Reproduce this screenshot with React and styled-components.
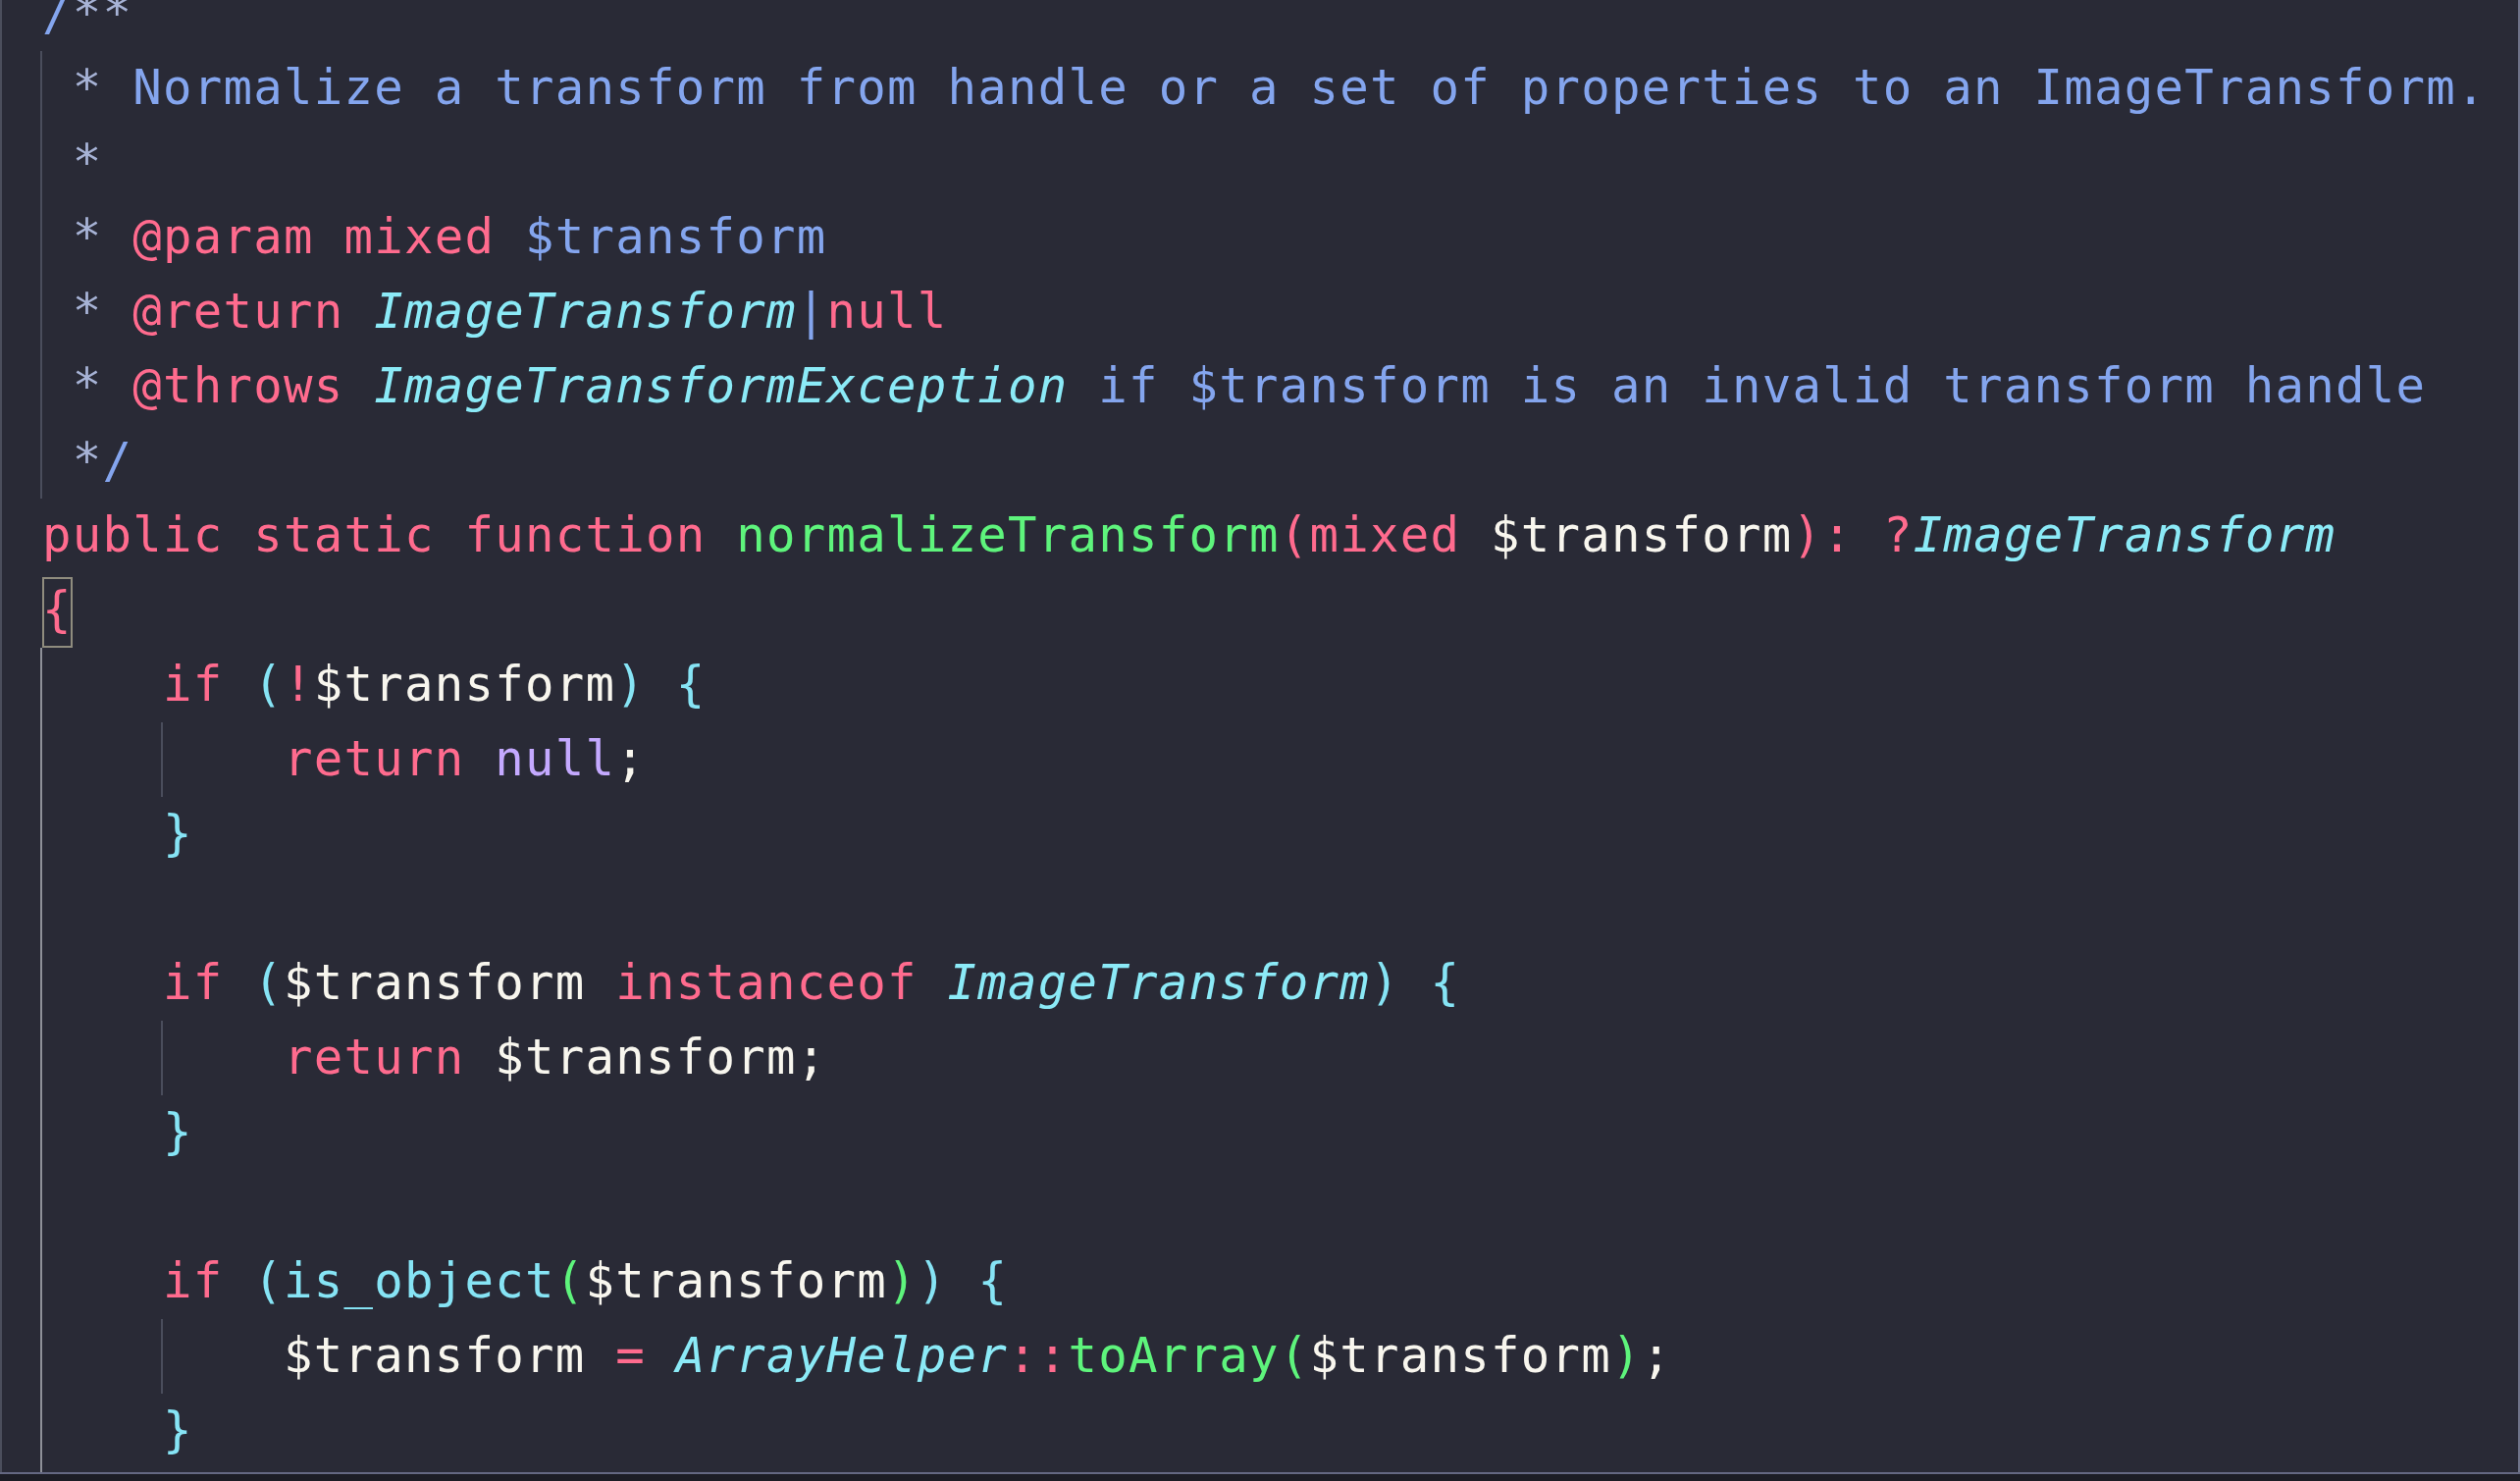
import React from "react";
import styled, { createGlobalStyle } from "styled-components";

const CHAR = 30.75;

const GlobalStyle = createGlobalStyle`
  html, body {
    margin: 0;
    padding: 0;
    background: #1c1d25;
    overflow: hidden;
  }
`;

const Editor = styled.div`
  width: 2568px;
  height: 1509px;
  box-sizing: border-box;
  display: flex;
  flex-direction: column;
  background: #1c1d25;
`;

const Viewport = styled.div`
  flex: 1;
  min-height: 0;
  overflow: hidden;
  background: #292a36;
  border-left: 2px solid #4b4e5c;
  border-right: 2px solid #70748a;
  padding-left: 41px;
`;

const BottomRule = styled.div`
  height: 2px;
  background: #646882;
`;

const BottomStrip = styled.div`
  height: 7px;
  background: #1c1d25;
`;

const Code = styled.div`
  margin-top: -24px;
  font-family: "DejaVu Sans Mono", "Liberation Mono", monospace;
  font-size: 49px;
  letter-spacing: 1.25px;
`;

const Line = styled.div`
  position: relative;
  height: 76px;
  line-height: 76px;
  white-space: pre;
`;

const Guide = styled.span`
  position: absolute;
  top: 0;
  bottom: 0;
  left: ${(p) => p.$col * CHAR - 2}px;
  width: ${(p) => (p.$active ? 2 : 1.5)}px;
  background: ${(p) => (p.$active ? "#8e9098" : "#4a4d5c")};
`;

const colors = {
  comment: "#84a5ee",
  star: "#a7b3d6",
  tag: "#ff6b8e",
  kw: "#ff6b8e",
  fn: "#5ef47c",
  var: "#f8f6ee",
  type: "#8beaf7",
  cyan: "#86e4f5",
  green: "#5ef47c",
  constant: "#c4a9ff",
};

const Token = styled.span`
  color: ${(p) => colors[p.$k] || "#f8f6ee"};
  font-style: ${(p) => (p.$k === "type" ? "italic" : "normal")};
`;

const Matched = styled.span`
  color: ${colors.kw};
  padding: 5px 0 10px;
  box-shadow: inset 0 0 0 2px #8f8c7e;
`;

const lines = [
  { t: [["/", "comment"], ["**", "star"]] },
  {
    g: [[0, false]],
    t: [
      [" ", ""],
      ["*", "star"],
      [" Normalize a transform from handle or a set of properties to an ImageTransform.", "comment"],
    ],
  },
  { g: [[0, false]], t: [[" ", ""], ["*", "star"]] },
  {
    g: [[0, false]],
    t: [
      [" ", ""],
      ["*", "star"],
      [" ", ""],
      ["@param mixed", "tag"],
      [" $transform", "comment"],
    ],
  },
  {
    g: [[0, false]],
    t: [
      [" ", ""],
      ["*", "star"],
      [" ", ""],
      ["@return", "tag"],
      [" ", ""],
      ["ImageTransform", "type"],
      ["|", "comment"],
      ["null", "tag"],
    ],
  },
  {
    g: [[0, false]],
    t: [
      [" ", ""],
      ["*", "star"],
      [" ", ""],
      ["@throws", "tag"],
      [" ", ""],
      ["ImageTransformException", "type"],
      [" if $transform is an invalid transform handle", "comment"],
    ],
  },
  { g: [[0, false]], t: [[" ", ""], ["*", "star"], ["/", "comment"]] },
  {
    t: [
      ["public static function ", "kw"],
      ["normalizeTransform", "fn"],
      ["(", "kw"],
      ["mixed", "kw"],
      [" ", ""],
      ["$transform", "var"],
      [")", "kw"],
      [":", "kw"],
      [" ", ""],
      ["?", "kw"],
      ["ImageTransform", "type"],
    ],
  },
  { match: true, t: [] },
  {
    g: [[0, true]],
    t: [
      ["    if ", "kw"],
      ["(", "cyan"],
      ["!", "kw"],
      ["$transform", "var"],
      [")", "cyan"],
      [" ", ""],
      ["{", "cyan"],
    ],
  },
  {
    g: [[0, true], [4, false]],
    t: [
      ["        return ", "kw"],
      ["null", "constant"],
      [";", "var"],
    ],
  },
  { g: [[0, true]], t: [["    }", "cyan"]] },
  { g: [[0, true]], t: [] },
  {
    g: [[0, true]],
    t: [
      ["    if ", "kw"],
      ["(", "cyan"],
      ["$transform", "var"],
      [" instanceof ", "kw"],
      ["ImageTransform", "type"],
      [")", "cyan"],
      [" ", ""],
      ["{", "cyan"],
    ],
  },
  {
    g: [[0, true], [4, false]],
    t: [
      ["        return ", "kw"],
      ["$transform", "var"],
      [";", "var"],
    ],
  },
  { g: [[0, true]], t: [["    }", "cyan"]] },
  { g: [[0, true]], t: [] },
  {
    g: [[0, true]],
    t: [
      ["    if ", "kw"],
      ["(", "cyan"],
      ["is_object", "cyan"],
      ["(", "green"],
      ["$transform", "var"],
      [")", "green"],
      [")", "cyan"],
      [" ", ""],
      ["{", "cyan"],
    ],
  },
  {
    g: [[0, true], [4, false]],
    t: [
      ["        ", ""],
      ["$transform", "var"],
      [" = ", "kw"],
      ["ArrayHelper", "type"],
      ["::", "kw"],
      ["toArray", "fn"],
      ["(", "green"],
      ["$transform", "var"],
      [")", "green"],
      [";", "var"],
    ],
  },
  { g: [[0, true]], t: [["    }", "cyan"]] },
  { g: [[0, true]], t: [] },
];

export default function App() {
  return (
    <>
      <GlobalStyle />
      <Editor>
        <Viewport>
          <Code>
            {lines.map((line, i) => (
              <Line key={i}>
                {(line.g || []).map(([col, active]) => (
                  <Guide key={col} $col={col} $active={active} />
                ))}
                {line.match && <Matched>{"{"}</Matched>}
                {line.t.map(([text, k], j) => (
                  <Token key={j} $k={k}>
                    {text}
                  </Token>
                ))}
              </Line>
            ))}
          </Code>
        </Viewport>
        <BottomRule />
        <BottomStrip />
      </Editor>
    </>
  );
}
